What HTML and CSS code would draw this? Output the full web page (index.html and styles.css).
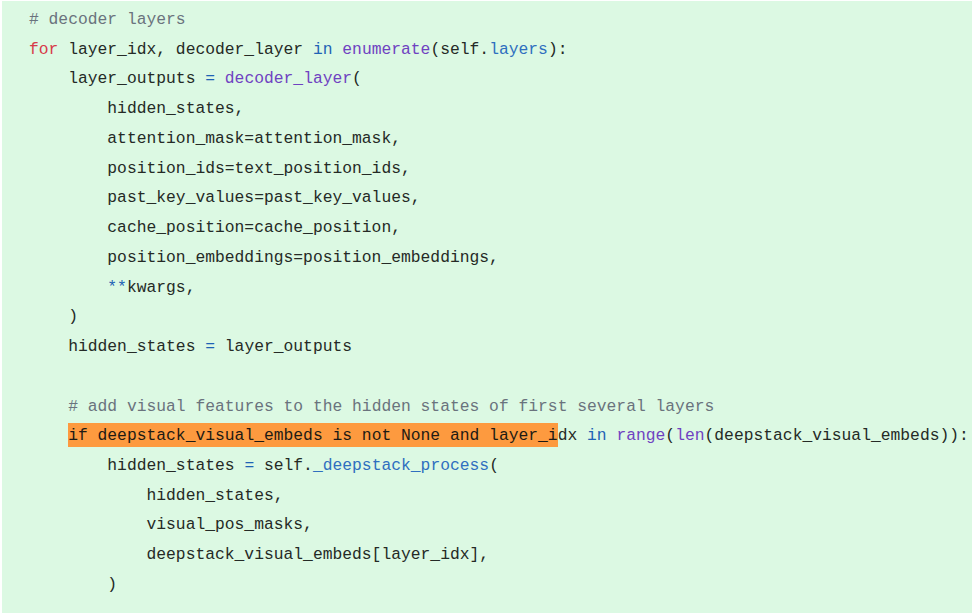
FILE: index.html
```html
<!DOCTYPE html>
<html>
<head>
<meta charset="utf-8">
<link rel="stylesheet" href="styles.css">
</head>
<body>
<div class="panel">
<pre class="code"><span class="c"># decoder layers</span>
<span class="k">for</span> layer_idx, decoder_layer <span class="o">in</span> <span class="f">enumerate</span>(self.<span class="p">layers</span>):
    layer_outputs <span class="o">=</span> <span class="f">decoder_layer</span>(
        hidden_states,
        attention_mask=attention_mask,
        position_ids=text_position_ids,
        past_key_values=past_key_values,
        cache_position=cache_position,
        position_embeddings=position_embeddings,
        <span class="o">**</span>kwargs,
    )
    hidden_states <span class="o">=</span> layer_outputs

    <span class="c"># add visual features to the hidden states of first several layers</span>
    <mark class="hl">if deepstack_visual_embeds is not None and layer_i</mark>dx <span class="o">in</span> <span class="f">range</span>(<span class="f">len</span>(deepstack_visual_embeds)):
        hidden_states <span class="o">=</span> self.<span class="p">_deepstack_process</span>(
            hidden_states,
            visual_pos_masks,
            deepstack_visual_embeds[layer_idx],
        )</pre>
</div>
</body>
</html>
```
FILE: styles.css
```css
html, body {
  margin: 0;
  padding: 0;
  background: #ffffff;
}
body {
  width: 972px;
  height: 615px;
  overflow: hidden;
}
.panel {
  margin: 1px 0 0 2px;
  height: 612px;
  background: #dcf9e3;
  padding: 4px 0 0 27px;
  box-sizing: border-box;
  overflow: hidden;
}
.code {
  margin: 0;
  font-family: "Liberation Mono", "DejaVu Sans Mono", monospace;
  font-size: 16.32px;
  line-height: 29.74px;
  color: #252a26;
  white-space: pre;
}
.c { color: #6a737d; }
.k { color: #d73a49; }
.o { color: #1f63b5; }
.f { color: #6f42c1; }
.p { color: #2f6fbf; }
.hl {
  background: #fd9a3f;
  color: #1e1a14;
  padding: 3px 0 2px;
}
```
